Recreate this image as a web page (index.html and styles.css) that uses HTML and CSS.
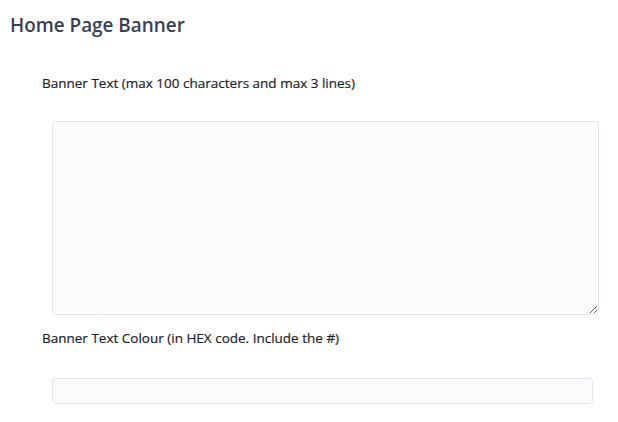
FILE: index.html
```html
<!DOCTYPE html>
<html>
<head>
<meta charset="utf-8">
<link rel="stylesheet" href="styles.css">
</head>
<body>
<div class="page">
  <h2 class="title">Home Page Banner</h2>
  <div class="form">
    <div class="group">
      <label class="label">Banner Text (max 100 characters and max 3 lines)</label>
      <textarea class="textarea"></textarea>
    </div>
    <div class="group">
      <label class="label">Banner Text Colour (in HEX code. Include the #)</label>
      <input class="input" type="text">
    </div>
  </div>
</div>
</body>
</html>
```

FILE: styles.css
```css
html, body {
  margin: 0;
  padding: 0;
  background: #ffffff;
}
body {
  font-family: "Open Sans", "Noto Sans", sans-serif;
  color: #2e3240;
}
.page {
  padding: 12px 10px 0 10px;
}
.title {
  margin: 0;
  font-size: 18.9px;
  font-weight: 600;
  line-height: 26px;
  color: #3a3f55;
}
.form {
  padding-left: 32px;
  margin-top: 37px;
}
.group {
  display: flex;
  flex-direction: column;
  align-items: flex-start;
}
.label {
  font-size: 13.5px;
  font-weight: 400;
  line-height: 16px;
  color: #1c1f28;
  -webkit-text-stroke: 0.2px #1c1f28;
}
.textarea {
  margin: 30px 0 0 10px;
  width: 547px;
  height: 194px;
  box-sizing: border-box;
  border: 1px solid #e3e4ee;
  border-radius: 4px;
  background: #fbfbfd;
  resize: vertical;
  font-family: inherit;
}
.group + .group {
  margin-top: 15px;
}
.input {
  margin: 32px 0 0 10px;
  width: 541px;
  height: 26px;
  box-sizing: border-box;
  border: 1px solid #e3e4ee;
  border-radius: 4px;
  background: #fbfbfd;
  font-family: inherit;
}
```
